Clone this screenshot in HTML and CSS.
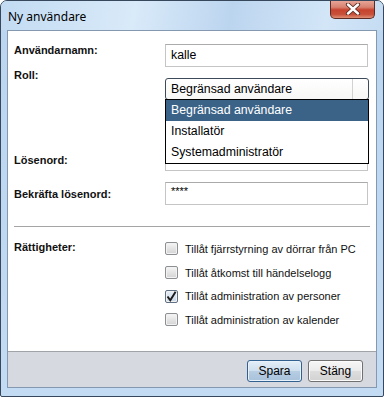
FILE: index.html
```html
<!DOCTYPE html>
<html lang="sv">

<head>
    <meta charset="UTF-8">
    <meta name="viewport" content="width=device-width, initial-scale=1.0">
    <title>Ny användare</title>
    <link rel="stylesheet" href="styles.css">
</head>

<body>
    <div class="window">
        <div class="titlebar">
            <span class="title">Ny användare</span>
            <div class="close-btn">
                <svg width="16" height="12" viewBox="0 0 16 12">
                    <path d="M3 1.5 L13 10.5 M13 1.5 L3 10.5" stroke="#5a2a22" stroke-width="4.2" stroke-linecap="round" />
                    <path d="M3 1.5 L13 10.5 M13 1.5 L3 10.5" stroke="#ffffff" stroke-width="2.4" stroke-linecap="round" />
                </svg>
            </div>
        </div>
        <div class="client">
            <div class="form">
                <div class="row row-user">
                    <label class="lbl">Användarnamn:</label>
                    <div class="field text-field">kalle</div>
                </div>
                <div class="row row-role">
                    <label class="lbl">Roll:</label>
                    <div class="combo-wrap">
                        <div class="combo">
                            <span class="combo-text">Begränsad användare</span>
                            <span class="combo-btn"></span>
                        </div>
                        <ul class="dropdown">
                            <li class="selected">Begränsad användare</li>
                            <li>Installatör</li>
                            <li>Systemadministratör</li>
                        </ul>
                    </div>
                </div>
                <div class="row row-pass">
                    <label class="lbl">Lösenord:</label>
                    <div class="field text-field"></div>
                </div>
                <div class="row row-confirm">
                    <label class="lbl">Bekräfta lösenord:</label>
                    <div class="field text-field stars">****</div>
                </div>
                <div class="separator"></div>
                <div class="row row-rights">
                    <label class="lbl">Rättigheter:</label>
                    <div class="checks">
                        <div class="check-row"><span class="box"></span>Tillåt fjärrstyrning av dörrar från PC</div>
                        <div class="check-row"><span class="box"></span>Tillåt åtkomst till händelselogg</div>
                        <div class="check-row">
                            <span class="box checked">
                                <svg width="11" height="11" viewBox="0 0 11 11">
                                    <path d="M1.5 5.5 L4.3 9.3 L9.6 0.8" fill="none" stroke="#1b1b1b" stroke-width="1.9" />
                                </svg>
                            </span>Tillåt administration av personer
                        </div>
                        <div class="check-row"><span class="box"></span>Tillåt administration av kalender</div>
                    </div>
                </div>
            </div>
            <div class="footer">
                <button class="btn btn-default">Spara</button>
                <button class="btn">Stäng</button>
            </div>
        </div>
    </div>
</body>

</html>
```

FILE: styles.css
```css
html,
body {
    margin: 0;
    padding: 0;
    background-color: #ffffff;
}

body {
    font-family: "Liberation Sans", Arial, sans-serif;
    font-size: 12.3px;
    color: #000000;
}

.window {
    position: relative;
    box-sizing: border-box;
    width: 384px;
    height: 397px;
    border: 1px solid #37475c;
    border-radius: 7px 7px 2px 2px;
    background: linear-gradient(180deg, #cfe3f6 0%, #bcd6f0 8%, #c3dbf3 100%);
    display: flex;
    flex-direction: column;
    overflow: hidden;
}

.titlebar {
    height: 29px;
    display: flex;
    align-items: center;
    background: linear-gradient(100deg, #c2dbf2 0%, #d9eaf9 35%, #bcd5ef 60%, #d3e6f8 85%, #c5dcf2 100%);
}

.title {
    font-family: "Noto Sans", "Open Sans", sans-serif;
    font-size: 12px;
    padding-left: 7px;
    padding-top: 1px;
    color: #000000;
}

.close-btn {
    position: absolute;
    top: -1px;
    left: 329px;
    width: 45px;
    height: 19px;
    box-sizing: border-box;
    border: 1px solid #5d2a24;
    border-top: none;
    border-radius: 0 0 5px 5px;
    background: linear-gradient(180deg, #e9aa9b 0%, #d88271 40%, #c6432e 55%, #c8503a 80%, #df8f76 100%);
    display: flex;
    align-items: center;
    justify-content: center;
}

.client {
    flex: 1;
    margin: 0 6px 8px 6px;
    border: 1px solid #8498af;
    background-color: #ffffff;
    display: flex;
    flex-direction: column;
}

.form {
    flex: 1;
    padding: 13px 0 0 6px;
}

.row {
    display: flex;
    align-items: center;
}

.lbl {
    width: 151px;
    flex-shrink: 0;
    font-weight: bold;
    font-size: 11px;
    line-height: 14px;
    color: #111111;
}

.field {
    box-sizing: border-box;
    width: 203px;
    height: 23px;
}

.text-field {
    border: 1px solid #c5c5c5;
    border-top-color: #ababab;
    padding: 0 5px;
    line-height: 21px;
}

.stars {
    font-size: 11px;
    line-height: 17px;
}

.row-user {
    align-items: flex-start;
}

.row-user .lbl {
    margin-top: -1px;
}

.row-role {
    margin-top: 1px;
    align-items: flex-start;
}

.combo-wrap {
    position: relative;
    margin-top: 10px;
}

.combo {
    box-sizing: border-box;
    width: 204px;
    height: 22px;
    border: 1px solid #3d4a5a;
    border-radius: 3px;
    display: flex;
    align-items: center;
    background: linear-gradient(180deg, #ffffff 0%, #f7f7f5 100%);
}

.combo-text {
    flex: 1;
    padding-left: 5px;
}

.combo-btn {
    width: 15px;
    height: 20px;
    border-left: 1px solid #d2d2d2;
}

.dropdown {
    position: absolute;
    top: 21px;
    left: 0;
    box-sizing: border-box;
    width: 204px;
    margin: 0;
    padding: 0;
    list-style: none;
    border: 1px solid #000000;
    background-color: #ffffff;
    z-index: 2;
}

.dropdown li {
    height: 21px;
    line-height: 21px;
    padding-left: 5px;
}

.dropdown li.selected {
    background-color: #3b6387;
    color: #ffffff;
}

.row-pass {
    margin-top: 48px;
}

.row-confirm {
    margin-top: 11px;
}

.separator {
    margin: 21px 6px 0 0;
    height: 1px;
    background-color: #a5a5a5;
}

.row-rights {
    margin-top: 10px;
    align-items: flex-start;
}

.row-rights .lbl {
    margin-top: 3px;
}

.checks {
    display: flex;
    flex-direction: column;
}

.check-row {
    height: 23.7px;
    display: flex;
    align-items: center;
    font-size: 11px;
    color: #111111;
}

.box {
    box-sizing: border-box;
    width: 13px;
    height: 13px;
    margin-right: 7px;
    border: 1px solid #8c8f93;
    border-radius: 2px;
    background: linear-gradient(180deg, #f6f6f6 0%, #e4e4e4 50%, #d4d4d4 100%);
    box-shadow: inset 0 0 0 1px #f2f2f2;
    display: flex;
    align-items: center;
    justify-content: center;
}

.box.checked {
    background: linear-gradient(180deg, #e6eef7 0%, #c9d7e7 100%);
    border-color: #5f6f84;
}

.footer {
    height: 36px;
    border-top: 1px solid #a0a3a8;
    background-color: #d6d9df;
    display: flex;
    justify-content: flex-end;
    align-items: flex-start;
    gap: 6px;
    padding: 8px 13px 0 0;
    box-sizing: border-box;
}

.btn {
    width: 55px;
    height: 22px;
    padding: 0;
    font-family: "Liberation Sans", Arial, sans-serif;
    font-size: 12px;
    color: #000000;
    border: 1px solid #707070;
    border-radius: 3px;
    background: linear-gradient(180deg, #f6f6f6 0%, #ebebeb 48%, #dddddd 52%, #d2d2d2 100%);
    box-shadow: inset 0 0 0 1px #fbfbfb;
}

.btn-default {
    border-color: #33618f;
    background: linear-gradient(180deg, #e3eef8 0%, #cfdfee 48%, #b6cde2 52%, #a8c2db 100%);
    box-shadow: inset 0 0 0 1px #e9f2fa;
}
```
